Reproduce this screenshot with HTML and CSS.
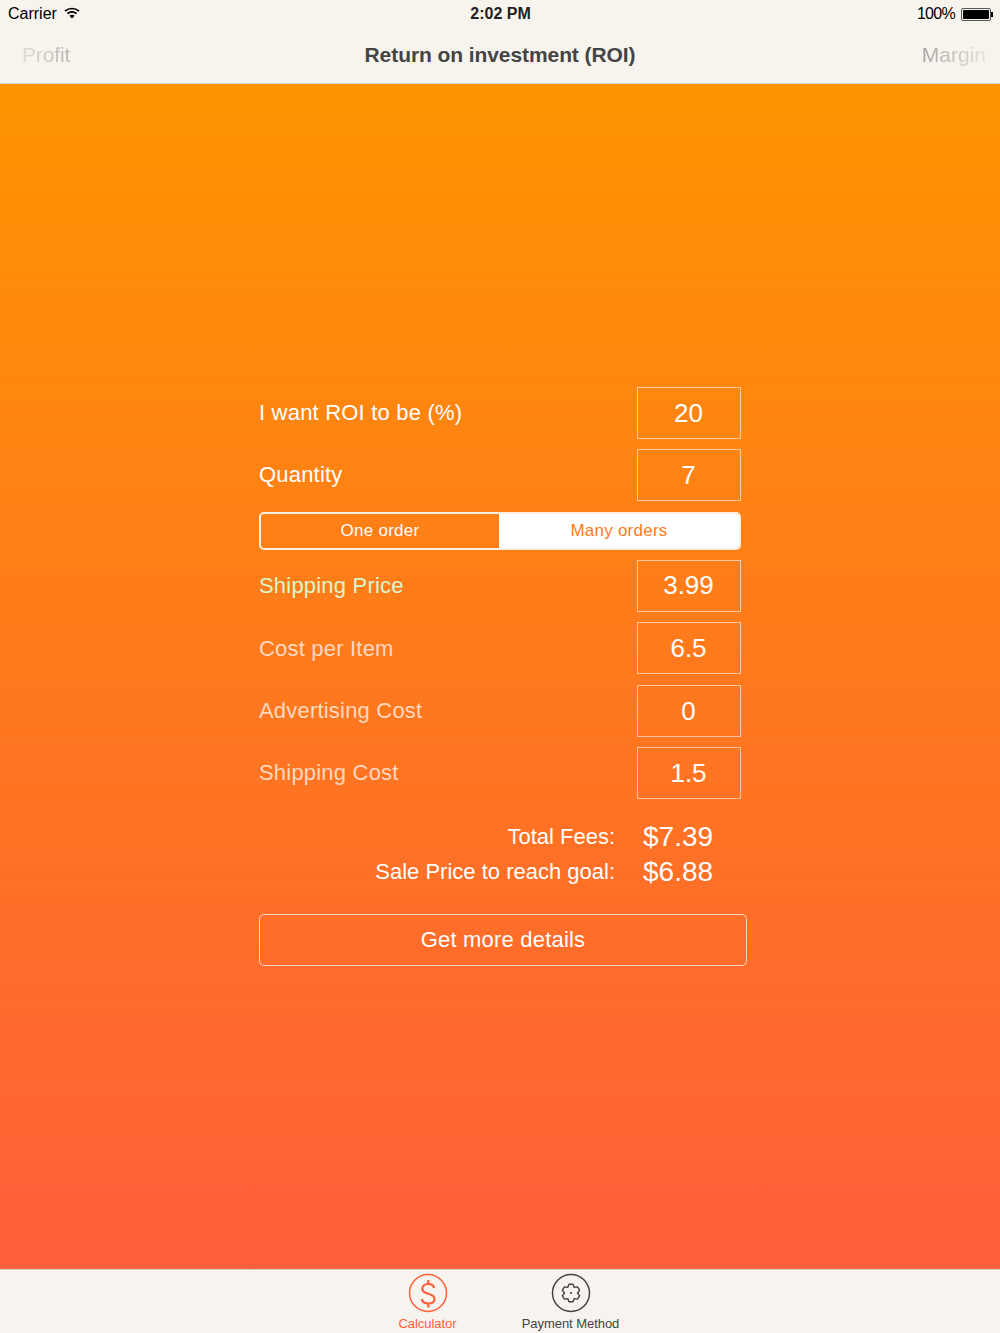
FILE: index.html
```html
<!DOCTYPE html>
<html lang="en">
<head>
<meta charset="utf-8">
<title>Return on investment (ROI)</title>
<link rel="stylesheet" href="styles.css">
</head>
<body>
<div class="app">
  <header class="topbar">
    <div class="status">
      <div class="status-left">
        <span>Carrier</span>
        <svg class="wifi" width="16" height="12" viewBox="0 0 16 12"><path d="M1 4.2C5 .6 11 .6 15 4.2" fill="none" stroke="#000" stroke-width="1.7"/><path d="M3.4 6.6C6 4.3 10 4.3 12.6 6.6" fill="none" stroke="#000" stroke-width="1.7"/><path d="M8 11.5 5.4 8.7C6.9 7.5 9.1 7.5 10.6 8.7Z" fill="#000"/></svg>
      </div>
      <div class="status-time">2:02 PM</div>
      <div class="status-right">
        <span>100%</span>
        <span class="battery"><span class="battery-fill"></span></span><span class="battery-tip"></span>
      </div>
    </div>
    <nav class="navbar">
      <span class="nav-link nav-profit">Profit</span>
      <h1 class="nav-title">Return on investment (ROI)</h1>
      <span class="nav-link nav-margin">Margin</span>
    </nav>
  </header>
  <main class="content">
    <form class="calc">
      <div class="row"><span class="label">I want ROI to be (%)</span><span class="field">20</span></div>
      <div class="row"><span class="label">Quantity</span><span class="field">7</span></div>
      <div class="segment"><span class="seg seg-off">One order</span><span class="seg seg-on">Many orders</span></div>
      <div class="row"><span class="label label-green">Shipping Price</span><span class="field">3.99</span></div>
      <div class="row"><span class="label label-dim">Cost per Item</span><span class="field">6.5</span></div>
      <div class="row"><span class="label label-dim">Advertising Cost</span><span class="field">0</span></div>
      <div class="row"><span class="label label-dim">Shipping Cost</span><span class="field">1.5</span></div>
      <div class="totals">
        <div class="total"><span class="total-label">Total Fees:</span><span class="total-value">$7.39</span></div>
        <div class="total"><span class="total-label">Sale Price to reach goal:</span><span class="total-value">$6.88</span></div>
      </div>
      <div class="details">Get more details</div>
    </form>
  </main>
  <footer class="tabbar">
    <div class="tab tab-active">
      <svg width="40" height="40" viewBox="0 0 40 40"><circle cx="20" cy="20" r="18.5" fill="none" stroke="#ff5f38" stroke-width="1.5"/><path d="M26.2 15C25.7 12.2 23.3 11 20.3 11C16.8 11 14.3 12.9 14.3 15.8C14.3 18.8 16.8 19.9 20.3 20.8C23.8 21.8 26.5 22.9 26.5 25.9C26.5 28.9 23.8 30.5 20.3 30.5C16.8 30.5 14.3 29 13.8 26M20.3 7v4M20.3 30.5v4" fill="none" stroke="#ff5f38" stroke-width="2.2"/></svg>
      <span class="tab-label">Calculator</span>
    </div>
    <div class="tab">
      <svg width="40" height="40" viewBox="0 0 40 40"><circle cx="20" cy="20" r="18.5" fill="none" stroke="#444" stroke-width="1.5"/><path d="M17.98 11.23H22.02L23.25 14.37L26.58 13.86L28.61 17.37L26.5 20L28.61 22.63L26.58 26.14L23.25 25.63L22.02 28.77H17.98L16.75 25.63L13.42 26.14L11.39 22.63L13.5 20L11.39 17.37L13.42 13.86L16.75 14.37Z" fill="none" stroke="#444" stroke-width="1.4" stroke-linejoin="round"/><circle cx="20" cy="20" r="1.1" fill="#444"/></svg>
      <span class="tab-label">Payment Method</span>
    </div>
  </footer>
</div>
</body>
</html>
```
FILE: styles.css
```css
* { box-sizing: border-box; }
html, body { margin: 0; padding: 0; }
body { font-family: "Liberation Sans", Arial, sans-serif; color: #fff; }
.app { width: 1000px; height: 1333px; display: flex; flex-direction: column; overflow: hidden; }
.topbar { height: 84px; background: #f7f4ee; border-bottom: 1px solid #d6d3ce; color: #000; }
.status { height: 28px; display: grid; grid-template-columns: 1fr auto 1fr; align-items: center; padding: 0 7px 0 8px; font-size: 16px; }
.status-left { display: flex; align-items: center; gap: 7px; }
.wifi { margin-top: -3px; }
.status-time { font-weight: 700; font-size: 16px; color: #222; }
.status-right { display: flex; align-items: center; justify-content: flex-end; letter-spacing: -.7px; }
.battery { width: 30px; height: 13px; margin-left: 6px; border: 1px solid #555; border-radius: 2px; padding: 1px; display: block; }
.battery-fill { display: block; height: 100%; background: #000; border-radius: 1px; }
.battery-tip { width: 2px; height: 5px; background: #000; }
.navbar { height: 54px; display: grid; grid-template-columns: 1fr auto 1fr; align-items: center; padding: 0 14px; }
.nav-title { margin: 0; font-size: 21px; font-weight: 700; color: #444; letter-spacing: -.08px; }
.nav-link { font-size: 21px; }
.nav-profit { background: linear-gradient(90deg, #dfdcd7, #b9b7b3); -webkit-background-clip: text; background-clip: text; color: transparent; justify-self: start; margin-left: 8px; letter-spacing: -.15px; }
.nav-margin { background: linear-gradient(90deg, #a5a4a1, #e6e3de); -webkit-background-clip: text; background-clip: text; color: transparent; justify-self: end; }
.content { flex: 1; background: linear-gradient(180deg, #ff9400 0%, #ff5e3a 100%); padding: 303px 0 0 259px; }
.calc { width: 490px; display: flex; flex-direction: column; }
.row { width: 482px; height: 52px; display: flex; justify-content: space-between; align-items: center; margin-bottom: 10.4px; }
.label { font-size: 22px; letter-spacing: .2px; }
.label-green { color: #d9f5cb; }
.label-dim { color: rgba(255, 255, 255, .72); padding-top: 1px; }
.field { width: 104px; height: 52px; border: 1px solid rgba(255, 255, 255, .58); font-size: 26px; display: flex; align-items: center; justify-content: center; padding-right: 1px; }
.label-dim + .field { padding-top: 1px; }
.segment { width: 482px; height: 38px; display: flex; border: 2px solid rgba(255, 255, 255, .88); border-radius: 5px; font-size: 17px; letter-spacing: .25px; margin-bottom: 10px; overflow: hidden; }
.seg { display: flex; align-items: center; justify-content: center; }
.seg-off { width: 238px; }
.seg-on { flex: 1; background: #fff; color: #ff7a1a; }
.totals { padding-top: 10px; }
.total { display: flex; align-items: center; height: 35px; }
.total-label { width: 356px; text-align: right; font-size: 22px; }
.total-value { margin-left: 28px; font-size: 28px; }
.details { width: 488px; height: 52px; margin-top: 25px; border: 1px solid rgba(255, 255, 255, .7); border-radius: 5px; display: flex; align-items: center; justify-content: center; font-size: 22px; letter-spacing: .2px; }
.tabbar { height: 64px; background: #f7f3ef; border-top: 1px solid #d6d3ce; display: flex; padding-left: 356px; }
.tab { width: 143px; display: flex; flex-direction: column; align-items: center; padding-top: 3px; color: #444; }
.tab-active { color: #ff5f38; }
.tab-label { font-size: 13px; margin-top: 3px; letter-spacing: -.05px; }
```
